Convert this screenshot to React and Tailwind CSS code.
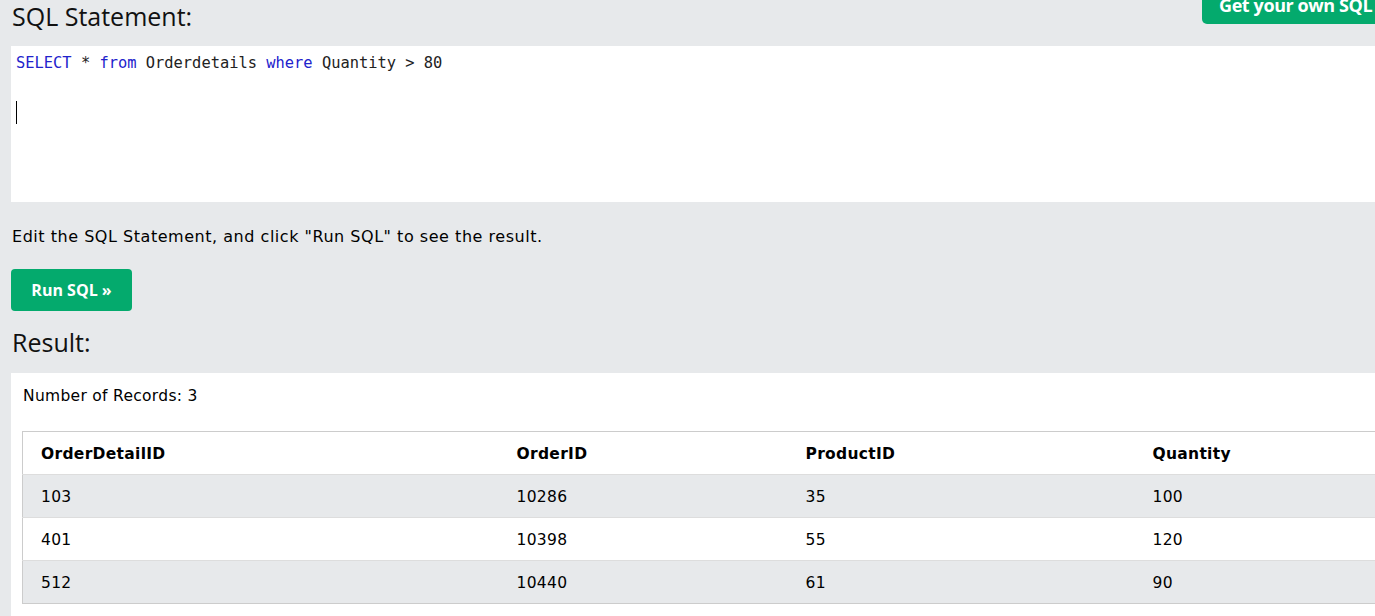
const rows = [
  ["103", "10286", "35", "100"],
  ["401", "10398", "55", "120"],
  ["512", "10440", "61", "90"],
];

const headers = ["OrderDetailID", "OrderID", "ProductID", "Quantity"];
const colWidths = ["w-[476px]", "w-[289px]", "w-[347px]", "w-[320px]"];

export default function App() {
  return (
    <div className="w-[1375px] h-[616px] overflow-hidden bg-[#E7E9EB] font-['DejaVu_Sans',Verdana,sans-serif] text-black">
      <div className="w-[1480px] pl-[11px]">
        <div className="flex items-start h-[46px]">
          <h2 className="w-[1191px] shrink-0 pl-[1px] text-[25px] leading-[32px] font-['Open_Sans',sans-serif] text-[#111]">
            SQL Statement:
          </h2>
          <button className="shrink-0 -mt-[15px] h-[39px] rounded-[5px] bg-[#04AA6D] px-[17px] text-[18px] font-bold leading-[38px] text-white font-['Open_Sans',sans-serif] tracking-[-0.4px]">
            Get your own SQL Server
          </button>
        </div>

        <div className="h-[156px] bg-white pl-[5px] pt-[8px] font-['DejaVu_Sans_Mono','Liberation_Mono',monospace] text-[15.4px] leading-[19px] text-[#222]">
          <div>
            <span className="text-[#2222cc]">SELECT</span> *{" "}
            <span className="text-[#2222cc]">from</span> Orderdetails{" "}
            <span className="text-[#2222cc]">where</span> Quantity &gt; 80
          </div>
          <div className="mt-[28px] h-[23px] w-px bg-black" />
        </div>

        <p className="mt-[24px] pl-[1px] text-[16px] leading-[22px] tracking-[0.53px]">
          Edit the SQL Statement, and click "Run SQL" to see the result.
        </p>

        <button className="mt-[21px] h-[42px] w-[121px] rounded-[4px] bg-[#04AA6D] text-[16px] font-bold text-white font-['Open_Sans',sans-serif]">
          Run SQL »
        </button>

        <h2 className="mt-[15px] pl-[1px] text-[25px] leading-[32px] font-['Open_Sans',sans-serif] text-[#111]">
          Result:
        </h2>

        <div className="mt-[15px] bg-white pl-[11px] pt-[12px] pb-[20px]">
          <div className="pl-[1px] text-[15.5px] leading-[22px] tracking-[0.3px]">Number of Records: 3</div>
          <table className="mt-[24px] table-fixed border-collapse border border-[#cccccc] border-r-0 text-[15.5px] tracking-[0.3px]">
            <thead>
              <tr>
                {headers.map((h, i) => (
                  <th
                    key={h}
                    className={`${colWidths[i]} h-[43px] pt-[3px] pl-[18px] text-left align-middle font-bold`}
                  >
                    {h}
                  </th>
                ))}
              </tr>
            </thead>
            <tbody>
              {rows.map((r, ri) => (
                <tr
                  key={ri}
                  className={`border-t border-[#dddddd] ${ri % 2 === 0 ? "bg-[#E7E9EB]" : "bg-white"}`}
                >
                  {r.map((c, ci) => (
                    <td key={ci} className="h-[43px] pt-[3px] pl-[18px] align-middle">
                      {c}
                    </td>
                  ))}
                </tr>
              ))}
            </tbody>
          </table>
        </div>
      </div>
    </div>
  );
}
